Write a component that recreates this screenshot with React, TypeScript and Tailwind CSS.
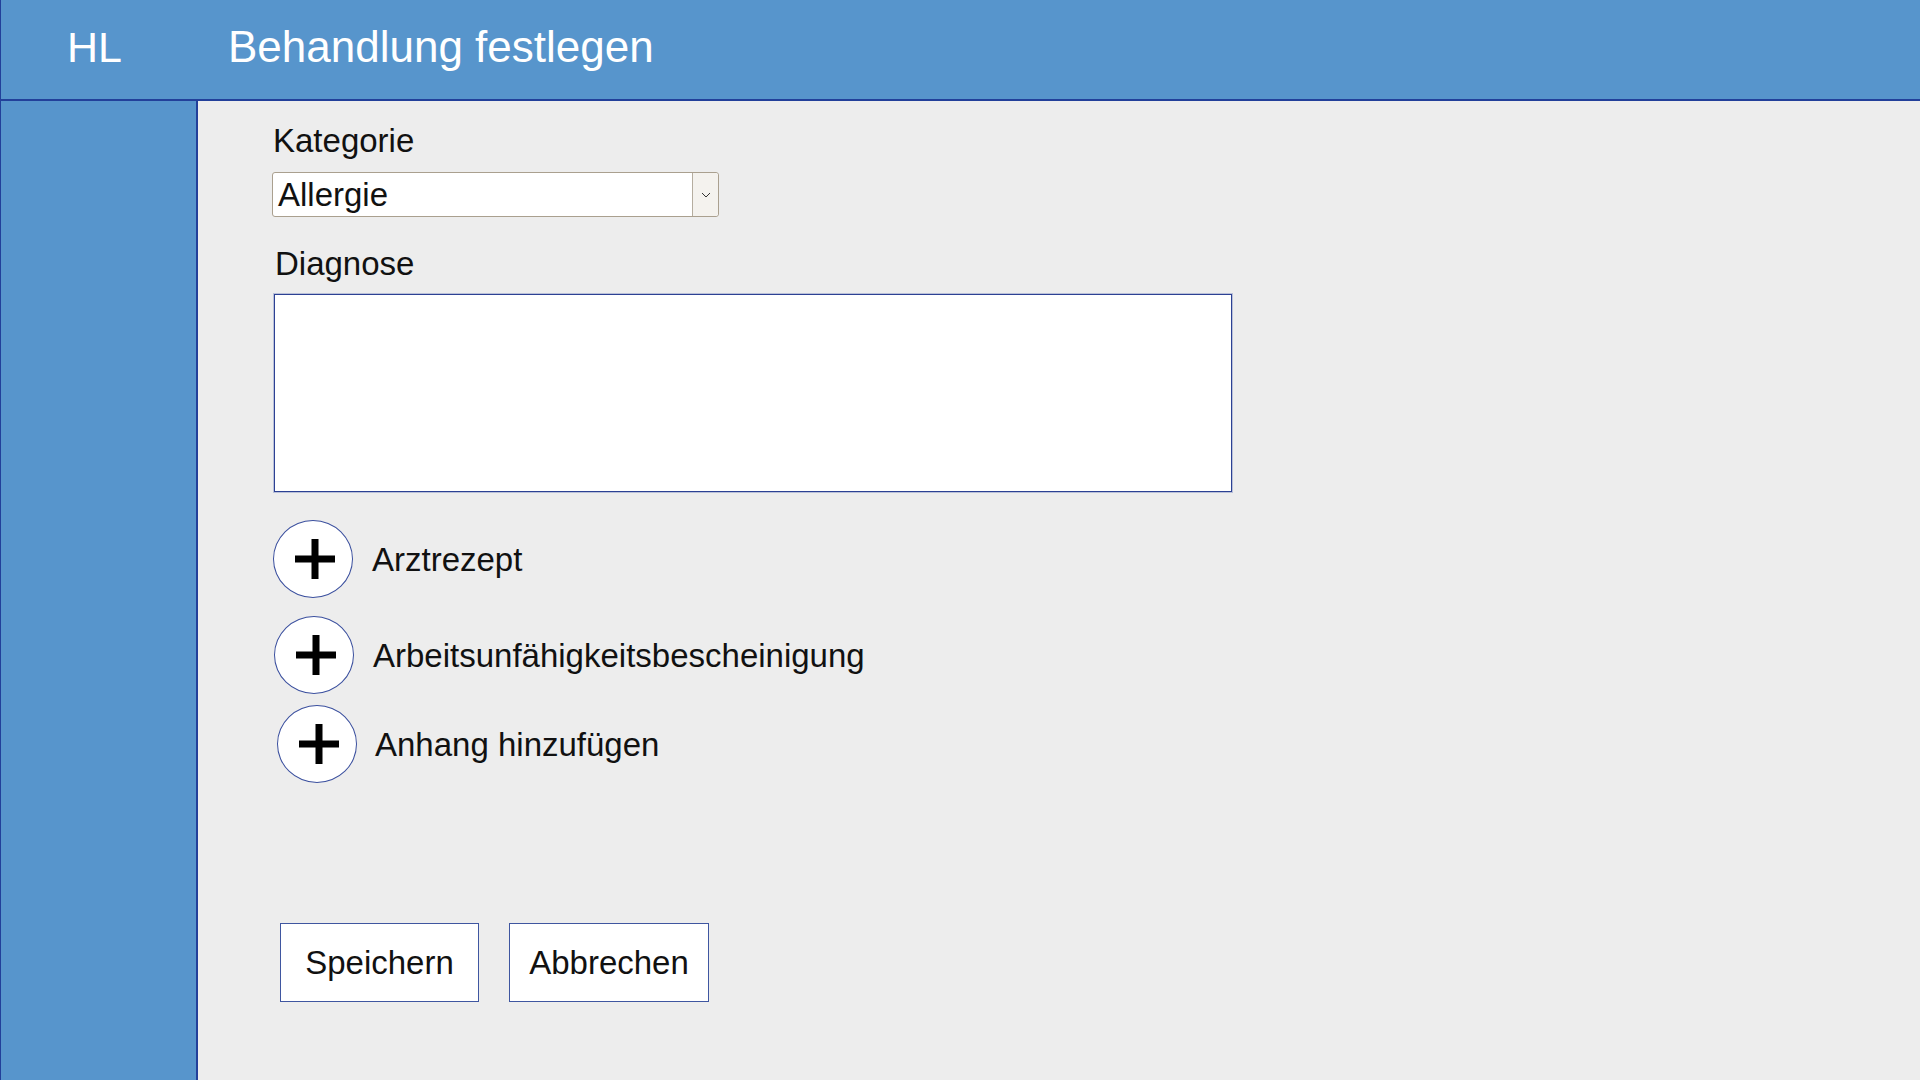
import React from "react";

function PlusCircle({ ml }: { ml: string }) {
  return (
    <div
      className={`w-[80px] h-[78px] rounded-[50%] border border-[#3a4f9e] bg-white flex items-center justify-center shrink-0 ${ml}`}
    >
      <svg width="40" height="40" viewBox="0 0 40 40" className="ml-[3px]">
        <rect x="0" y="16.5" width="40" height="7" fill="#000" />
        <rect x="16.5" y="0" width="7" height="40" fill="#000" />
      </svg>
    </div>
  );
}

export default function App() {
  return (
    <div
      className="w-[1920px] h-[1080px] flex flex-col overflow-hidden text-[#111]"
      style={{ fontFamily: '"Liberation Sans", Arial, sans-serif' }}
    >
      <header className="h-[101px] shrink-0 bg-[#5795cc] border-b-2 border-b-[#22409a] border-l border-l-[#22409a] flex items-center pb-[5px] text-white leading-none">
        <span className="ml-[66px] w-[161px] text-[43px]">HL</span>
        <span className="text-[44px]">Behandlung festlegen</span>
      </header>
      <div className="flex flex-1">
        <aside className="w-[198px] shrink-0 bg-[#5795cc] border-r-2 border-r-[#22409a] border-l border-l-[#22409a]" />
        <main className="flex-1 bg-[#ededed] pl-[74px] pt-[21px] flex flex-col">
          <label className="text-[33px] leading-[38px] ml-[1px]">Kategorie</label>
          <div className="mt-[12px] w-[447px] h-[45px] bg-white border border-[#aaa08f] rounded-[3px] flex">
            <div className="flex-1 text-[33px] leading-[43px] pl-[5px]">Allergie</div>
            <div className="w-[26px] border-l border-l-[#b5ad9f] bg-[#f4f2ee] rounded-r-[3px] flex items-center justify-center">
              <svg width="10" height="6" viewBox="0 0 10 6">
                <path d="M1 1 L5 5 L9 1" fill="none" stroke="#333" strokeWidth="1" />
              </svg>
            </div>
          </div>
          <label className="mt-[28px] text-[33px] leading-[38px] ml-[3px]">Diagnose</label>
          <div className="mt-[11px] ml-[2px] w-[958px] h-[198px] bg-white border border-[#2c4193] shadow-[0_0_0_1px_rgba(90,110,180,0.35)]" />
          <div className="mt-[28px] flex items-center">
            <PlusCircle ml="ml-[1px]" />
            <span className="ml-[19px] text-[33px] leading-none">Arztrezept</span>
          </div>
          <div className="mt-[18px] flex items-center">
            <PlusCircle ml="ml-[2px]" />
            <span className="ml-[19px] text-[33px] leading-none">Arbeitsunfähigkeitsbescheinigung</span>
          </div>
          <div className="mt-[11px] flex items-center">
            <PlusCircle ml="ml-[5px]" />
            <span className="ml-[18px] text-[33px] leading-none">Anhang hinzufügen</span>
          </div>
          <div className="mt-[140px] ml-[8px] flex gap-[30px]">
            <button className="w-[199px] h-[79px] bg-white border border-[#3f56a0] text-[33px] text-[#111]">
              Speichern
            </button>
            <button className="w-[200px] h-[79px] bg-white border border-[#3f56a0] text-[33px] text-[#111]">
              Abbrechen
            </button>
          </div>
        </main>
      </div>
    </div>
  );
}
